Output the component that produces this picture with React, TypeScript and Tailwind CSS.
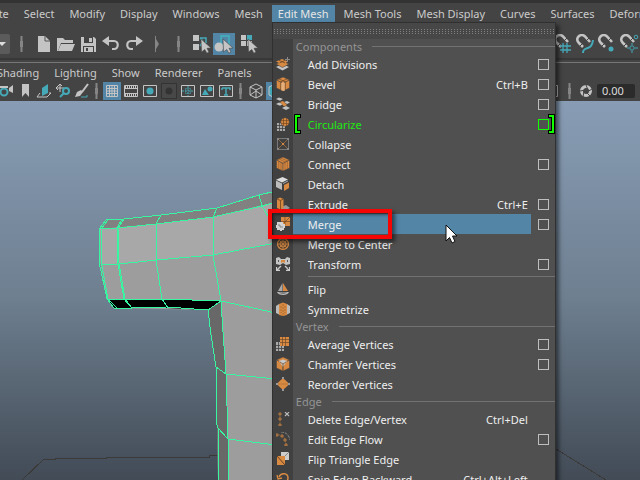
import type { ReactNode } from 'react';

const ORANGE = '#d98a42';
const TEAL = '#45a9b8';
const LIGHT = '#c4c4c4';

type Item = { label: string; icon: ReactNode; shortcut?: string; option?: boolean; state?: 'new' | 'active' };

const Cube = ({ top = ORANGE, left = ORANGE, right = ORANGE }) => (
  <g stroke="#454545" strokeWidth=".5" strokeLinejoin="round">
    <path d="M7 0 13.500 3 7 6.400 .5 3Z" fill={top} />
    <path d="M.5 3 7 6.400V14L.5 11Z" fill={left} />
    <path d="M13.500 3 7 6.400V14L13.500 11Z" fill={right} />
  </g>
);

const icons = {
  divisions: (
    <>
      <path d="M0 10 6.500 7 13 10 6.500 13.500Z" fill={LIGHT} />
      <path d="M0 7 6.500 4 13 7 6.500 10.500Z" fill={ORANGE} stroke="#454545" strokeWidth=".6" />
      <path d="M0 4.500 6 2 12 4.500 6.500 7.500Z" fill={ORANGE} />
      <path d="m3 3.300 6 2.700M9 3.300 3.500 6" stroke="#5b3d22" strokeWidth=".7" />
      <path d="M11.500 0v5M9 2.500h5" stroke="#8b8b8b" />
    </>
  ),
  bevel: (
    <>
      <Cube />
      <path d="M5 6 7 5l2 1v7.600l-2 .4-2-1Z" fill="#e6ae78" />
      <path d="m3 2 7 3.200M11 2 4 5.200" stroke="#6b4524" strokeWidth=".7" />
      <path d="M4.700 5.500v7.500M9.300 5.500v7.500" stroke="#6b4524" strokeWidth=".7" />
    </>
  ),
  bridge: (
    <>
      <path d="m0 2 3-1.500L7 2 4 3.800ZM0 7l3-1.500L7 7 4 8.800ZM6 11l4-2 4 2-4 2ZM8 5l3-1 3 1.500-3 1.500Z" fill={LIGHT} />
      <path d="m4 5 3-1 4 4-3 1.500Z" fill={ORANGE} />
    </>
  ),
  circularize: (
    <>
      <path d="M1 6h8v8H1Z" fill="#aaa" />
      <path d="M3.500 6v8M6.500 6v8M1 8.500h8M1 11.500h8" stroke="#3f3f3f" strokeWidth=".8" />
      <circle cx="9" cy="5" r="4.300" fill={ORANGE} stroke="#3f3f3f" strokeWidth=".5" />
      <path d="M7.500 1v8M10.500 1v8M5 3.600h8M5 6.400h8" stroke="#70451f" strokeWidth=".7" />
    </>
  ),
  collapse: (
    <>
      <path d="M1.500 1.500h11v11h-11Z" fill="none" stroke="#858585" strokeWidth=".8" />
      <path d="m2 2 10 10M12 2 2 12" stroke="#a66d3a" strokeWidth=".8" />
      <path d="M6 6h2v2H6Z" fill={ORANGE} />
      <path d="M1 1h2v2H1ZM11 1h2v2h-2ZM1 11h2v2H1ZM11 11h2v2h-2Z" fill="#888" />
    </>
  ),
  connect: (
    <>
      <Cube />
      <path d="M2.700 4.200v7.500M5 5.200v7.600M9 5.200v7.600M11.300 4.200v7.500M3 2l6.500 3M5 1l6.500 3" stroke="#8a5527" strokeWidth=".6" />
    </>
  ),
  detach: (
    <>
      <path d="M6.500 0 12 2.500 6 5.500 0 2.700Z" fill="#ddd" />
      <path d="M0 3.500 6 6.500v6.500L0 10Z" fill="#bbb" />
      <path d="m8 8 5-2.500V11L8 14Z" fill={ORANGE} />
      <path d="m7 6 5-2.500v1L7 7Z" fill="#aaa" />
    </>
  ),
  extrude: (
    <>
      <path d="m3 11 7-3 4 3-6 3Z" fill="#999" />
      <path d="m1 2 3-1.500 3.500 1.500v9l-3 1.500L1 11Z" fill={ORANGE} />
      <path d="m1 2 3.500 1.500v9M4.500 3.500 7.500 2" fill="none" stroke="#6d4520" strokeWidth=".8" />
    </>
  ),
  merge: (
    <>
      <path d="M5 0h9v9H5Z" fill={ORANGE} />
      <path d="m14 0-6 6M9 0v8M5 4.500h9" stroke="#70451f" strokeWidth=".7" />
      <path d="M1 5h6v2h2v4H8v2H6v1H4v-1H1v-2H0V8h1Z" fill="#d2d2d2" />
      <path d="M2 8h2v2h3" fill="none" stroke="#777" strokeWidth=".8" />
    </>
  ),
  mergeCenter: (
    <>
      <circle cx="7" cy="7" r="5.500" fill="#60482f" stroke={ORANGE} strokeWidth="1.200" />
      <path d="M7 1v12M1 7h12M3 3l8 8M11 3l-8 8" stroke="#c88446" strokeWidth=".8" />
      <circle cx="7" cy="7" r="3" fill="none" stroke={ORANGE} strokeWidth=".8" />
    </>
  ),
  transform: (
    <>
      <path d="m0 1 3-1 2 2h4l2-2 3 1v6l-4 1-3-2-3 2-4-1Z" fill={LIGHT} />
      <path d="M5 3h4v3L7 5 5 6Z" fill={ORANGE} />
      <path d="m5 9-4 4M9 9l4 4M.5 10v3.500H4M13.500 10v3.500H10" fill="none" stroke="#ccc" strokeWidth="1.300" />
      <path d="M2.500 3v2M11.500 3v2" stroke="#555" />
    </>
  ),
  flip: (
    <>
      <path d="M6.500 1v8H2Z" fill="#aaa" />
      <path d="M7 1v8h5Z" fill={ORANGE} />
      <path d="M1 10h12c-1 4-11 4-12 0Z" fill="#bbb" />
      <path d="M3 10.500h8c-1 1.500-7 1.500-8 0Z" fill="#555" />
    </>
  ),
  symmetrize: (
    <>
      <path d="M3 2 0 4v7l4 2ZM11 2l3 2v7l-4 2Z" fill="#bbb" />
      <path d="m3 2 4-1.500L11 2v11l-4 1-4-1Z" fill={ORANGE} />
      <path d="M7 2v11M5 4v7M9 4v7" stroke="#93602f" strokeWidth=".7" strokeDasharray="2 1" />
    </>
  ),
  average: (
    <>
      <path d="M0 5h8v9H0Z" fill="#aaa" />
      <path d="M2.500 5v9M5.500 5v9M0 8.500h8M0 11.500h8" stroke="#3f3f3f" strokeWidth=".8" />
      <path d="M4 0h9v9H4Z" fill={ORANGE} />
      <path d="M6.500 0v9M9.500 0v9M4 2.500h9M4 5.500h9" stroke="#6c4a2a" strokeWidth=".7" />
    </>
  ),
  chamfer: (
    <>
      <Cube />
      <path d="m3 4 4-1.500L11 4 7 10Z" fill="#c8c8c8" />
      <path d="m4 5 3 2 3-2M7 7v6" fill="none" stroke="#75502e" strokeWidth=".8" />
    </>
  ),
  reorder: (
    <>
      <path d="m7 1 6.500 6L7 13 .5 7Z" fill={ORANGE} />
      <path d="M1 7h12" stroke="#a86d38" strokeWidth=".7" />
      <path d="M0 6h2v2H0ZM12 6h2v2h-2ZM6 0h2v2H6ZM6 12h2v2H6Z" fill="#999" />
    </>
  ),
  deleteEdge: (
    <>
      <path d="M4 2v12" stroke="#8b653f" strokeDasharray="1 1" />
      <path d="M3 1h2v2H3ZM3 6h2v2H3ZM3 12h2v2H3Z" fill="#3f3f3f" stroke={ORANGE} strokeWidth=".8" />
      <path d="m9 0 4 4m0-4L9 4" stroke="#bbb" strokeWidth="1.100" />
    </>
  ),
  edgeFlow: (
    <>
      <path d="M5 0c5 0 8 3 9 8" fill="none" stroke="#888" strokeDasharray="3 1" />
      <path d="M1 3c6-1 9 4 9 10" fill="none" stroke="#8b653f" strokeDasharray="1 1" />
      <path d="M0 2h2v2H0ZM5 3h2v2H5ZM8 7h2v2H8ZM9 12h2v2H9Z" fill="#3f3f3f" stroke={ORANGE} strokeWidth=".8" />
    </>
  ),
  flipTriangle: (
    <>
      <path d="M5 0h8v8H5Z" fill="#ccc" />
      <path d="m5 8 8-8" stroke="#666" strokeWidth=".7" />
      <path d="M1 4h8v9H1Z" fill={ORANGE} />
      <path d="m1 4 8 9" stroke="#65401f" />
    </>
  ),
  spin: (
    <>
      <path d="M3 5c2-5 9-4 9 1 0 4-4 5-5 8" fill="none" stroke={ORANGE} strokeWidth="1.500" />
      <path d="m1 3 1 4 4-1" fill="none" stroke={ORANGE} strokeWidth="1.300" />
    </>
  ),
};

const sections: { title?: string; items: Item[] }[] = [
  {
    title: 'Components',
    items: [
      { label: 'Add Divisions', icon: icons.divisions, option: true },
      { label: 'Bevel', icon: icons.bevel, shortcut: 'Ctrl+B', option: true },
      { label: 'Bridge', icon: icons.bridge, option: true },
      { label: 'Circularize', icon: icons.circularize, option: true, state: 'new' },
      { label: 'Collapse', icon: icons.collapse },
      { label: 'Connect', icon: icons.connect, option: true },
      { label: 'Detach', icon: icons.detach },
      { label: 'Extrude', icon: icons.extrude, shortcut: 'Ctrl+E', option: true },
      { label: 'Merge', icon: icons.merge, option: true, state: 'active' },
      { label: 'Merge to Center', icon: icons.mergeCenter },
      { label: 'Transform', icon: icons.transform, option: true },
    ],
  },
  {
    items: [
      { label: 'Flip', icon: icons.flip },
      { label: 'Symmetrize', icon: icons.symmetrize },
    ],
  },
  {
    title: 'Vertex',
    items: [
      { label: 'Average Vertices', icon: icons.average, option: true },
      { label: 'Chamfer Vertices', icon: icons.chamfer, option: true },
      { label: 'Reorder Vertices', icon: icons.reorder },
    ],
  },
  {
    title: 'Edge',
    items: [
      { label: 'Delete Edge/Vertex', icon: icons.deleteEdge, shortcut: 'Ctrl+Del' },
      { label: 'Edit Edge Flow', icon: icons.edgeFlow, option: true },
      { label: 'Flip Triangle Edge', icon: icons.flipTriangle },
      { label: 'Spin Edge Backward', icon: icons.spin, shortcut: 'Ctrl+Alt+Left' },
    ],
  },
];

const Bracket = ({ className }: { className: string }) => (
  <svg viewBox="0 0 7 20" className={`absolute top-0 h-5 w-[7px] ${className}`}>
    <path d="M5 2H2V18H5" fill="none" stroke="#000" strokeWidth="4" strokeLinecap="square" />
    <path d="M6 2H2V18H6" fill="none" stroke="#12ff00" strokeWidth="2" />
  </svg>
);

const MenuRow = ({ item }: { item: Item }) => {
  const isNew = item.state === 'new';
  const isActive = item.state === 'active';

  return (
    <div className="relative flex h-5 shrink-0 items-stretch">
      <button className="flex min-w-0 flex-1 items-stretch text-left">
        <span className="flex w-[20px] shrink-0 items-center justify-center">
          <svg viewBox="0 0 14 14" className="size-[14px]">{item.icon}</svg>
        </span>
        <span
          className={`flex flex-1 items-center justify-between pl-[15px] pr-[3px] pt-px ${
            isActive ? 'bg-[#5285a6]' : ''
          } ${isNew ? 'text-[#1eea10]' : 'text-[#eeeeee]'}`}
        >
          <span>{item.label}</span>
          <span>{item.shortcut}</span>
        </span>
      </button>
      <span className="flex w-[24px] shrink-0 items-center pl-[7px]">
        {item.option && (
          <input
            type="checkbox"
            aria-label={`${item.label} options`}
            className={`size-[11px] appearance-none border ${isNew ? 'border-[#12ff00]' : 'border-[#bebebe]'}`}
          />
        )}
      </span>
      {isNew && (
        <>
          <Bracket className="left-[21px]" />
          <Bracket className="right-0 -scale-x-100" />
        </>
      )}
    </div>
  );
};

const EditMeshMenu = () => (
  <div className="absolute left-0 top-full z-20 w-[284px] border border-[#303030] bg-[#505050] bg-[linear-gradient(90deg,#404040_20px,#505050_20px)] text-[11px] leading-[15px] shadow-[3px_3px_4px_rgba(0,0,0,0.5)]">
    <button aria-label="Tear off menu" className="flex h-4 w-full flex-col justify-center gap-px bg-[#474747] px-px">
      {[0, 1, 2].map((row) => (
        <span key={row} className="h-px w-full bg-[repeating-linear-gradient(90deg,#808080_0_1px,transparent_1px_3px)]" />
      ))}
    </button>
    {sections.map((section, index) => (
      <div key={index}>
        {section.title ? (
          <div className="flex h-[15px] items-center gap-[10px] pl-[23px] text-[#949494]">
            <span>{section.title}</span>
            <span className="h-px flex-1 bg-[#727272]" />
          </div>
        ) : (
          <div className="flex h-[5px] items-center pl-[35px]">
            <span className="h-px flex-1 bg-[#727272]" />
          </div>
        )}
        {section.items.map((item) => (
          <MenuRow key={item.label} item={item} />
        ))}
      </div>
    ))}
  </div>
);

const menus = ['Create', 'Select', 'Modify', 'Display', 'Windows', 'Mesh', 'Edit Mesh', 'Mesh Tools', 'Mesh Display', 'Curves', 'Surfaces', 'Deform'];

const MenuBar = () => (
  <nav className="relative z-20 flex h-[22px] shrink-0 items-stretch border-t-[3px] border-[#333] pt-[2px]">
    <div className="-ml-[31px] flex gap-[3px] whitespace-nowrap">
      {menus.map((name) => (
        <div key={name} className="relative">
          <button className={`h-full px-[6px] ${name === 'Edit Mesh' ? 'bg-[#5285a6] text-[#e5e5e5]' : ''}`}>{name}</button>
          {name === 'Edit Mesh' && <EditMeshMenu />}
        </div>
      ))}
    </div>
  </nav>
);

const Grip = ({ className = '' }: { className?: string }) => (
  <svg viewBox="0 0 3 16" className={`h-4 w-[3px] shrink-0 ${className}`}>
    <path d="M.5 0h2v5H3v6h-.5v5h-2v-5H0V5h.5Z" fill="#858585" />
  </svg>
);

const Tool = ({ label, on, small, children }: { label: string; on?: boolean; small?: boolean; children: ReactNode }) => (
  <button
    aria-label={label}
    className={`flex shrink-0 items-center justify-center ${small ? 'size-[18px]' : 'size-[22px]'} ${on ? 'bg-[#5285a6]' : ''}`}
  >
    <svg viewBox={small ? '0 0 16 16' : '0 0 20 20'} className={small ? 'size-4' : 'size-5'} fill="none" stroke={LIGHT}>
      {children}
    </svg>
  </button>
);

const Pointer = () => <path d="m9 5 10 9-4 .3 2 3.700-2.200 1.200-2-3.700L9.500 18Z" fill={LIGHT} stroke="#444" strokeWidth=".6" />;

const Magnet = () => (
  <>
    <path d="M8 13 3.500 8.500C-.5 4 6-1.500 10 2.500L15 8" strokeWidth="2.600" />
    <path d="m5 12 3-3M11 7l3-3" stroke="#444" />
  </>
);

const Toolbar = () => (
  <div className="flex h-[38px] shrink-0 items-center border-b-2 border-[#383838] pt-[8px]">
    <div className="flex w-[272px] shrink-0 items-center">
      <button aria-label="Menu set" className="flex h-5 w-[10px] items-center rounded-r-xs bg-[#5b5b5b]">
        <svg viewBox="0 0 6 6" className="size-[6px]"><path d="M0 1h6L2 5 0 3Z" fill="#ddd" /></svg>
      </button>
      <Grip className="ml-[10px] mr-[10px]" />
      <Tool label="New scene">
        <path d="M4 2h7l5 5v11H4Z" fill={LIGHT} stroke="none" />
        <path d="M11 2v5h5" stroke="#555" />
      </Tool>
      <Tool label="Open scene">
        <path d="M1 17V4h6l2 2h8v3H5L2 17Z" fill={LIGHT} stroke="none" />
        <path d="M5 10h14l-3 7H2Z" fill={LIGHT} stroke="none" />
      </Tool>
      <Tool label="Save scene">
        <path d="M3 3h13l2 2v13H3Z" fill={LIGHT} stroke="none" />
        <path d="M6 3h9v6H6ZM5 12h11v6H5Z" fill="#444" stroke="none" />
        <path d="M11 4h3v4h-3ZM6 13h9v5H6Z" fill={LIGHT} stroke="none" />
        <path d="M8 14h2v3H8Z" fill="#444" stroke="none" />
      </Tool>
      <span className="w-px" />
      <Tool label="Undo">
        <path d="M5 7h8c5 0 5 8 0 8h-2" strokeWidth="2.200" />
        <path d="M8 2 1 7l7 5Z" fill={LIGHT} stroke="none" />
      </Tool>
      <span className="w-px" />
      <Tool label="Redo">
        <path d="M15 7H7c-5 0-5 8 0 8h2" strokeWidth="2.200" />
        <path d="m12 2 7 5-7 5Z" fill={LIGHT} stroke="none" />
      </Tool>
      <svg viewBox="0 0 6 16" className="ml-[9px] mr-[17px] h-4 w-[6px]">
        <path d="M1 0h1v3l3 5-3 5v3H1Z" fill="#858585" />
      </svg>
      <Grip className="mr-[11px]" />
      <Tool label="Select by hierarchy">
        <path d="M1 1h6v6H1ZM1 10h6v6H1Z" fill={LIGHT} stroke="none" />
        <path d="M8 4h6v5M8 4l3 3M8 12l2-3" stroke={TEAL} strokeWidth="1.500" />
        <Pointer />
      </Tool>
      <Tool label="Select by object" on>
        <path d="M7 2h8v9H7Z" stroke={TEAL} strokeWidth="1.800" />
        <circle cx="5" cy="13" r="4.500" fill={LIGHT} stroke="none" />
        <Pointer />
      </Tool>
      <span className="w-[3px]" />
      <Tool label="Select by component">
        <path d="M2 1h5v5H2ZM2 7h5v5H2ZM8 7h5v5H8Z" fill={LIGHT} stroke="none" />
        <path d="M8 1h5v5H8Z" fill={TEAL} stroke="none" />
        <Pointer />
      </Tool>
    </div>
    <div className="ml-auto flex items-center">
      <Tool label="Snap to grids">
        <Magnet />
        <path d="M7 12h11M7 16h11M10 9v10M14 9v10" stroke={TEAL} strokeWidth="1.300" />
      </Tool>
      <Tool label="Snap to curves">
        <Magnet />
        <path d="M8 19c0-8 9-1 10-13" stroke={TEAL} strokeWidth="2" />
      </Tool>
      <Tool label="Snap to points">
        <Magnet />
        <circle cx="14" cy="15" r="2.500" fill={TEAL} stroke="none" />
      </Tool>
      <Tool label="Snap to projected center">
        <Magnet />
        <circle cx="17" cy="3" r="1.800" stroke={TEAL} />
        <circle cx="13" cy="14" r="2.200" stroke={TEAL} />
        <path d="M13 9v2M13 17v2M8 14h2M16 14h3" stroke={TEAL} />
      </Tool>
    </div>
  </div>
);

const PanelBar = () => (
  <div className="mt-[2px] shrink-0 border-t border-[#777]">
    <nav className="-ml-[3px] flex h-[18px] items-center gap-[15px] whitespace-nowrap">
      {['Shading', 'Lighting', 'Show', 'Renderer', 'Panels'].map((name) => (
        <button key={name}>{name}</button>
      ))}
    </nav>
    <div className="flex h-5 items-center">
      <div className="flex w-[272px] shrink-0 items-center overflow-hidden">
        <div className="-ml-[3px] flex shrink-0 items-center gap-px">
          <Tool small label="Camera">
            <path d="m11 5 4-3v8l-4-2Z" fill={LIGHT} stroke="none" />
            <circle cx="6" cy="9" r="3.500" stroke={TEAL} strokeWidth="2" />
            <path d="M2 4h8" strokeWidth="2" />
          </Tool>
          <Tool small label="Bookmark">
            <path d="M5 1h7v13l-3.500-4L5 14Z" fill={LIGHT} stroke="none" />
          </Tool>
          <Tool small label="Image plane">
            <path d="M6 5 12 1v9l-6 3Z" fill={TEAL} stroke="none" />
            <path d="M4 10 1 14h10l4-4h-2" />
          </Tool>
          <Tool small label="Pan and zoom">
            <path d="M1 5h8M5 1v8M1 5l2-2M1 5l2 2M5 1 3 3M5 1l2 2" />
            <circle cx="11" cy="8" r="3" stroke={TEAL} strokeWidth="2" />
            <path d="m9 10-4 4" stroke={TEAL} strokeWidth="2" />
          </Tool>
          <Tool small label="Grease pencil">
            <path d="m14 1-6 8" strokeWidth="2" />
            <path d="m7 7-4 2-2 5 5-1 3-4Z" fill={LIGHT} stroke="none" />
            <path d="M7 14h6v-2" stroke={TEAL} />
          </Tool>
        </div>
        <Grip className="ml-[4px] mr-[5px]" />
        <div className="flex shrink-0 items-center gap-px">
          <Tool small label="Grid" on>
            <path d="M2.500 2.500h11v11h-11ZM5.500 2v12M8 2v12M10.500 2v12M2 5.500h12M2 8h12M2 10.500h12" />
          </Tool>
          <Tool small label="Film gate">
            <path d="M1.500 2.500h13v11h-13ZM1 5.500h14M1 10.500h14" />
            <path d="M2 4h12M2 12h12" strokeWidth="2" strokeDasharray="1 1" />
          </Tool>
          <Tool small label="Resolution gate">
            <path d="M1.500 2.500h13v11h-13Z" />
            <circle cx="8" cy="8" r="3.500" fill={TEAL} stroke="none" />
          </Tool>
          <Tool small label="Gate mask">
            <path d="M.5.5h15v15H.5Z" fill="#484848" stroke="#333" />
            <circle cx="8" cy="8" r="3.500" fill="#333" stroke="none" />
          </Tool>
          <Tool small label="Field chart">
            <path d="M1.500 2.500h13v11h-13Z" />
            <path d="M8 3v10M2 8h12" stroke={TEAL} strokeDasharray="2 1" />
            <path d="M5.500 5.500h5v5h-5Z" stroke={TEAL} strokeDasharray="1 1" />
          </Tool>
          <Tool small label="Safe action">
            <path d="M1.500 2.500h13v11h-13Z" />
            <circle cx="11" cy="6" r="2.500" fill={TEAL} stroke="none" />
            <path d="m6 6 4 6H3Z" fill={TEAL} stroke="none" />
          </Tool>
          <Tool small label="Safe title">
            <path d="M1.500 2.500h13v11h-13Z" />
            <path d="M4 5h8v2M4 7V5M8 5v7M6 12h4" stroke={TEAL} strokeWidth="1.500" />
          </Tool>
        </div>
        <Grip className="ml-[4px] mr-[5px]" />
        <div className="flex shrink-0 items-center gap-px">
          <Tool small label="Wireframe">
            <path d="m8 1 6 3v8l-6 3-6-3V4ZM2 4l6 3 6-3M8 7v8M2 12l6-4 6 4" />
          </Tool>
          <Tool small label="Shaded" on>
            <path d="m8 1 6 3v8l-6 3-6-3V4Z" fill={TEAL} />
          </Tool>
        </div>
      </div>
      <div className="ml-auto flex items-center">
        <Tool small label="Isolate select">
          <path d="M1.500 2.500h11v11h-11ZM5 6l5 5" />
        </Tool>
        <Grip className="mx-[6px]" />
        <Tool small label="Exposure">
          <circle cx="8" cy="8" r="4.500" strokeWidth="3" />
          <path d="m8 2 2 5M14 6l-5 3M12 13l-4-4M5 14l1-6M2 8l6-1" stroke="#444" />
        </Tool>
        <input
          aria-label="Exposure value"
          defaultValue="0.00"
          className="ml-[2px] mr-[5px] h-[14px] w-[38px] rounded-xs bg-[#2b2b2b] pl-[5px] text-[11px] leading-[14px] text-[#ddd]"
        />
      </div>
    </div>
  </div>
);

const Viewport = () => (
  <main className="min-h-0 flex-1 bg-linear-to-b from-[#889db5] via-[#6e7f90] via-52% to-[#424b56]">
    <svg viewBox="0 101 640 379" preserveAspectRatio="xMidYMin slice" className="h-full w-full">
      <path d="M22 480 44 459H55V458H106V457H209V455H218M556 449 606 480" stroke="#3c3a39" fill="none" shapeRendering="crispEdges" />
      <path d="M100 229 156 224 213 217 276 202V480H218L216 367 208 310 114 308 107 299 100 262Z" fill="#9d9d9d" />
      <path d="M100 229 106 220 161 215 217 208 259 195 276 191V202L213 217 156 224Z" fill="#818181" />
      <path d="M100 229 156 224 213 217 276 202V243L213 255 157 260 101 265Z" fill="#a8a8a8" />
      <path d="M208 310 221 301 226 372 229 480H218L216 367Z" fill="#686868" />
      <path d="M107 299 162 299 221 301 208 310 167 308 114 308Z" fill="#000" />
      <g fill="none" stroke="#37f5a0" strokeWidth="1" shapeRendering="crispEdges">
        <path d="M276 191 259 195 217 208 161 215 124 219 106 220 99 229V262L107 299 114 308H132L167 307 208 310 221 301" />
        <path d="M99 229 118 228 156 224 213 217 262 206 276 202M101 265 119 264 157 260 213 255 276 243" />
        <path d="M108 220 101 229 102 266 108 299 117 308M124 219 118 228 119 263 125 299 132 308M122 219 117 228 118 264 124 299 131 307" />
        <path d="M161 215 156 224V260L162 299 168 308M217 208 213 217V255L221 301M259 195 262 206 268 216M107 299 162 299 221 301 276 313" />
        <path d="M208 310 211 335 216 367V422L218 428V480M221 301 223 332 226 374 228 438 229 480M216 367 226 374 276 379M218 428 228 439 276 445" />
      </g>
    </svg>
  </main>
);

const Overlay = () => (
  <>
    <div className="pointer-events-none absolute left-[268px] top-[209px] z-30 h-[30px] w-[124px] border-4 border-[#f60505] shadow-[3px_3px_4px_rgba(0,0,0,0.5),inset_2px_2px_3px_rgba(0,0,0,0.4)]" />
    <svg viewBox="0 0 13 20" className="pointer-events-none absolute left-[445px] top-[224px] z-30 h-5 w-[13px]">
      <path d="M1 1V17L4.500 13.500 7 19 10 17.500 7.500 12H12Z" fill="#fff" stroke="#111" />
    </svg>
  </>
);

export default function App() {
  return (
    <div className="relative flex h-screen w-full flex-col overflow-hidden bg-[#444] font-['Noto_Sans','Open_Sans',sans-serif] text-[11px] leading-[15px] text-[#cbcbcb]">
      <MenuBar />
      <Toolbar />
      <PanelBar />
      <Viewport />
      <Overlay />
    </div>
  );
}
